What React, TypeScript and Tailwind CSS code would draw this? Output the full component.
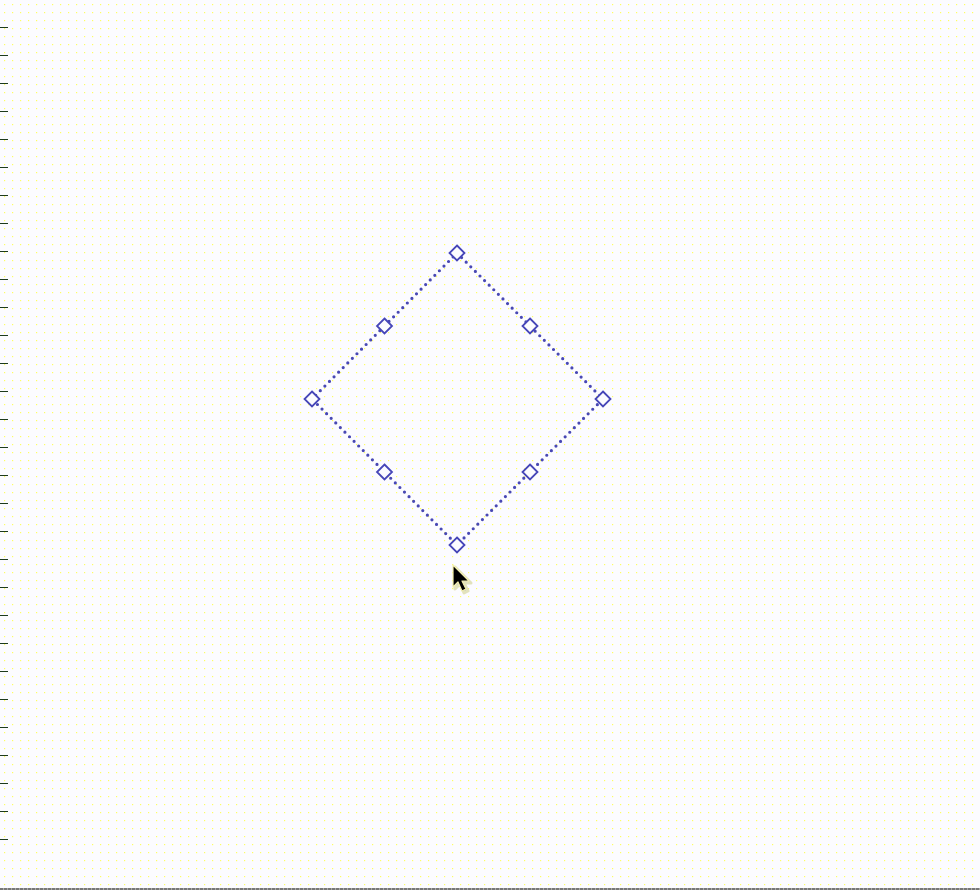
import React from "react";

const ticks = Array.from({ length: 30 }, (_, i) => i);

function Handle({ x, y }: { x: number; y: number }) {
  const r = 7.5;
  return (
    <polygon
      points={`${x},${y - r} ${x + r},${y} ${x},${y + r} ${x - r},${y}`}
      fill="#fcfcff"
      stroke="#4646b8"
      strokeWidth={1.8}
    />
  );
}

export default function App() {
  const T = { x: 457, y: 253 };
  const R = { x: 603, y: 399 };
  const B = { x: 457, y: 545 };
  const L = { x: 312, y: 399 };
  const mid = (a: { x: number; y: number }, b: { x: number; y: number }) => ({
    x: (a.x + b.x) / 2,
    y: (a.y + b.y) / 2,
  });
  return (
    <div className="relative w-[980px] h-[890px] overflow-hidden bg-[#fcfcff] font-['Liberation_Sans',sans-serif]">
      <svg className="absolute inset-0" width={980} height={890}>
        <defs>
          <pattern id="dots" x={0} y={0} width={8} height={8} patternUnits="userSpaceOnUse">
            <rect x={4} y={4} width={1.2} height={1.2} fill="#ffff60" />
          </pattern>
        </defs>
        <rect width={980} height={890} fill="url(#dots)" />
      </svg>

      <div className="absolute left-0 top-0 flex flex-col">
        {ticks.map((i) => (
          <div key={i} className="h-[28px] flex flex-col justify-end">
            <div className="w-[8px] h-[1px] bg-[#1c3a1c]" />
          </div>
        ))}
      </div>

      <svg className="absolute inset-0" width={980} height={890}>
        <polygon
          points={`${T.x},${T.y} ${R.x},${R.y} ${B.x},${B.y} ${L.x},${L.y}`}
          fill="none"
          stroke="#4848b4"
          strokeWidth={3.2}
          strokeDasharray="0 6.5"
          strokeLinecap="round"
        />
        {[T, R, B, L, mid(T, R), mid(R, B), mid(B, L), mid(L, T)].map((p, i) => (
          <Handle key={i} x={p.x} y={p.y} />
        ))}
        <g transform="translate(453,565)">
          <path
            d="M0,0 L0,22 L5,17 L9,26 L13,24 L9,16 L16,16 Z"
            fill="#b0b0b0"
            stroke="#d8d8a0"
            strokeWidth={3}
            strokeLinejoin="round"
            transform="translate(2,2)"
            opacity={0.7}
          />
          <path
            d="M0,0 L0,22 L5,17 L9,26 L13,24 L9,16 L16,16 Z"
            fill="#000"
            stroke="#f4f0b0"
            strokeWidth={1.2}
            strokeLinejoin="round"
          />
        </g>
      </svg>

      <div className="absolute left-0 right-0 bottom-0 h-[2px] bg-[repeating-linear-gradient(90deg,#777_0px,#777_3px,#aaa_3px,#aaa_4px)]" />
    </div>
  );
}
